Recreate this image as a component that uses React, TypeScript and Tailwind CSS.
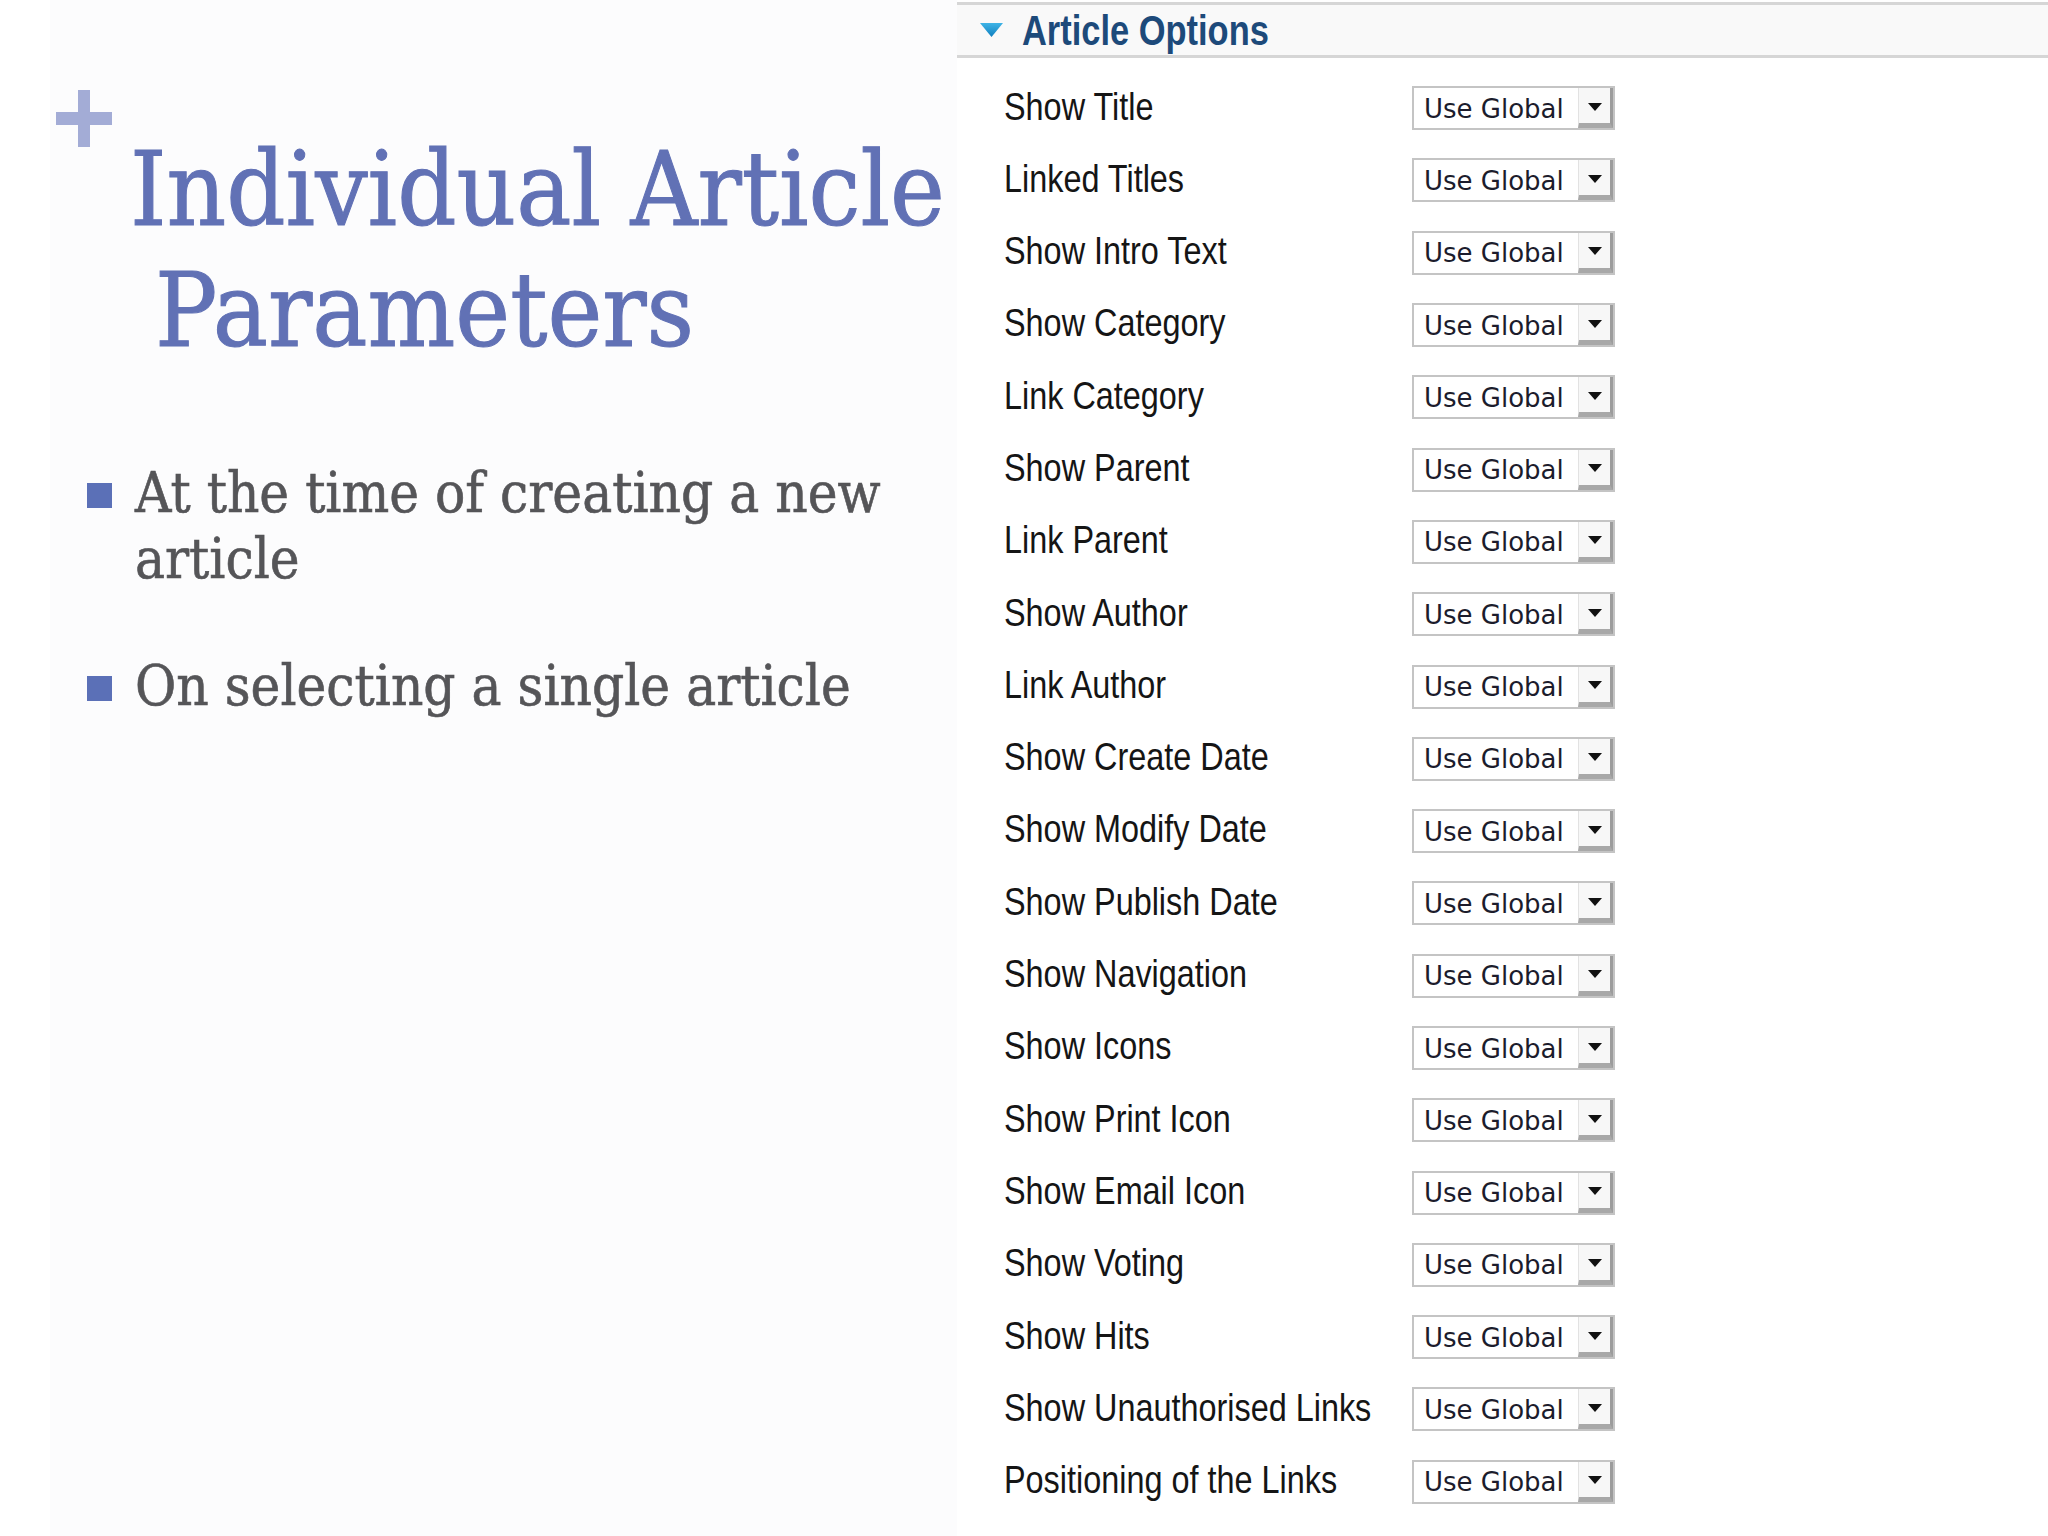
import React from 'react';

const options = [
  'Show Title',
  'Linked Titles',
  'Show Intro Text',
  'Show Category',
  'Link Category',
  'Show Parent',
  'Link Parent',
  'Show Author',
  'Link Author',
  'Show Create Date',
  'Show Modify Date',
  'Show Publish Date',
  'Show Navigation',
  'Show Icons',
  'Show Print Icon',
  'Show Email Icon',
  'Show Voting',
  'Show Hits',
  'Show Unauthorised Links',
  'Positioning of the Links',
];

const slab = { fontFamily: '"DejaVu Serif Condensed", "DejaVu Serif", serif' };
// no narrow face installed: Arial metrics squeezed to Arial Narrow width
const narrow = { fontFamily: '"Liberation Sans", Arial, sans-serif' };

function UseGlobalSelect() {
  return (
    <div className="mt-[4px] flex h-[44px] w-[203px] items-stretch border-2 border-[#c4c4c4] bg-white">
      <div
        className="flex flex-1 items-center pl-[10px] pt-[2px] text-[26px] text-[#1c1c2c]"
        style={{ fontFamily: '"DejaVu Sans", Verdana, sans-serif' }}
      >
        Use Global
      </div>
      <div className="flex w-[35px] items-center justify-center border-l border-[#e2e2e2] border-r-[3px] border-b-[5px] border-r-[#9c9c9c] border-b-[#a8a8a8] bg-[#f7f7f7]">
        <svg width="14" height="8" viewBox="0 0 14 8" className="mt-[2px]">
          <path d="M0 0 L14 0 L7 8 Z" fill="#111" />
        </svg>
      </div>
    </div>
  );
}

export default function App() {
  return (
    <div className="flex h-[1536px] w-[2048px] overflow-hidden bg-white">
      {/* slide */}
      <div className="w-[957px] shrink-0 pl-[50px]">
        <div className="h-full bg-[#fcfcfd] pt-[90px]">
          <div className="relative ml-[6px] h-[57px] w-[56px]">
            <div className="absolute left-0 top-[22px] h-[13px] w-[56px] bg-[#a3acd6]" />
            <div className="absolute left-[22px] top-0 h-[57px] w-[12px] bg-[#a3acd6]" />
          </div>

          <div
            className="-mt-[18px] pl-[80px] font-stretch-condensed text-[103px] leading-[121px] text-[#6171b5] [-webkit-text-stroke:1px_#6171b5]"
            style={slab}
          >
            <div>Individual Article</div>
            <div className="pl-[25px]">Parameters</div>
          </div>

          <div
            className="mt-[89px] flex flex-col gap-[61px] text-[#555558] [-webkit-text-stroke:0.6px_#555558]"
            style={slab}
          >
            <div className="flex pl-[37px]">
              <div className="mt-[23px] h-[25px] w-[25px] shrink-0 bg-[#5b70b7]" />
              <div className="ml-[23px] font-stretch-condensed text-[56px] leading-[66px]">
                At the time of creating a new
                <br />
                article
              </div>
            </div>
            <div className="flex pl-[37px]">
              <div className="mt-[23px] h-[25px] w-[25px] shrink-0 bg-[#5b70b7]" />
              <div className="ml-[23px] font-stretch-condensed text-[56px] leading-[66px]">
                On selecting a single article
              </div>
            </div>
          </div>
        </div>
      </div>

      {/* article options panel */}
      <div className="flex-1">
        <div className="mt-[2px] flex h-[56px] items-center border-y-[3px] border-[#d6d6d6] bg-[#f9f9f9] pl-[23px]">
          <svg width="23" height="14" viewBox="0 0 23 14">
            <defs>
              <linearGradient id="tri" x1="0" y1="0" x2="0" y2="1">
                <stop offset="0" stopColor="#3fb4e6" />
                <stop offset="1" stopColor="#0f7fbf" />
              </linearGradient>
            </defs>
            <path d="M0 0 L23 0 L11.5 14 Z" fill="url(#tri)" />
          </svg>
          <span
            className="ml-[19px] origin-left scale-x-[0.82] whitespace-nowrap text-[42px] font-bold text-[#1d4a7a]"
            style={narrow}
          >
            Article Options
          </span>
        </div>

        <div className="pt-[12px] pl-[47px]">
          {options.map((label) => (
            <div key={label} className="flex h-[72.3px] items-center">
              <div className="w-[408px] shrink-0">
                <div
                  className="origin-left scale-x-[0.82] whitespace-nowrap text-[39.5px] text-[#151515]"
                  style={narrow}
                >
                  {label}
                </div>
              </div>
              <UseGlobalSelect />
            </div>
          ))}
        </div>
      </div>
    </div>
  );
}
